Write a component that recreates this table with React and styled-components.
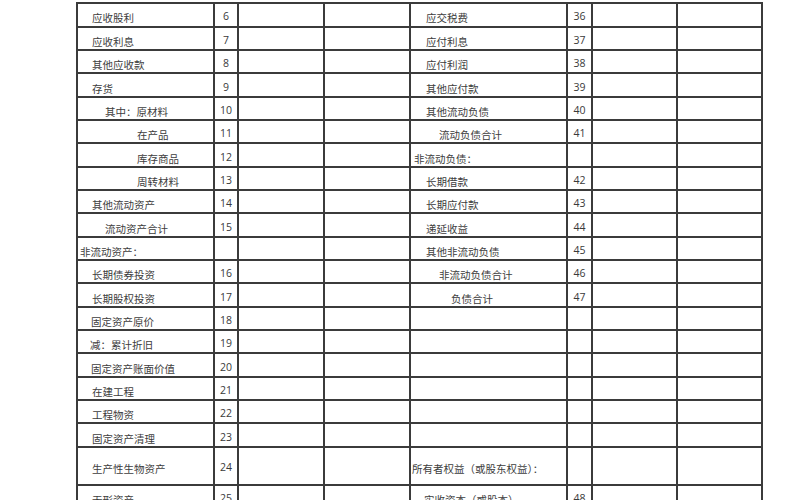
import React from "react";
import styled, { createGlobalStyle } from "styled-components";

const Global = createGlobalStyle`
  html, body {
    margin: 0;
    padding: 0;
    background: #ffffff;
    height: 500px;
    overflow: hidden;
  }
  body {
    font-family: "Noto Sans CJK SC", "Noto Sans", sans-serif;
  }
`;

const Page = styled.div`
  padding-top: 2.3px;
  padding-left: 76px;
`;

const Sheet = styled.div`
  display: grid;
  width: 687px;
  box-sizing: border-box;
  grid-template-columns: 135px 22px 84px 84px 155px 23px 83px 83px;
  grid-template-rows: ${(p) => p.$rows};
  gap: 2px;
  padding: 2px;
  background: #3b3b3b;
`;

const Cell = styled.div`
  background: #ffffff;
  display: flex;
  align-items: center;
  box-sizing: border-box;
  overflow: hidden;
  white-space: nowrap;
`;

const Label = styled(Cell)`
  padding-left: ${(p) => p.$indent}px;
  padding-top: 6px;
  font-family: "Noto Sans CJK SC", sans-serif;
  font-size: 10.5px;
  color: #3d3d3d;
  letter-spacing: 0px;
`;

const Num = styled(Cell)`
  justify-content: center;
  padding-top: 3px;
  font-family: "Open Sans", "Noto Sans", sans-serif;
  font-size: 10.5px;
  color: #3a3a3a;
`;

const Blank = styled(Cell)``;

const left = [
  ["应收股利", 14, "6"],
  ["应收利息", 14, "7"],
  ["其他应收款", 14, "8"],
  ["存货", 14, "9"],
  ["其中：原材料", 27, "10"],
  ["在产品", 59, "11"],
  ["库存商品", 59, "12"],
  ["周转材料", 59, "13"],
  ["其他流动资产", 14, "14"],
  ["流动资产合计", 27, "15"],
  ["非流动资产：", 2, ""],
  ["长期债券投资", 14, "16"],
  ["长期股权投资", 14, "17"],
  ["固定资产原价", 13, "18"],
  ["减：累计折旧", 12, "19"],
  ["固定资产账面价值", 13, "20"],
  ["在建工程", 14, "21"],
  ["工程物资", 14, "22"],
  ["固定资产清理", 14, "23"],
  ["生产性生物资产", 14, "24"],
  ["无形资产", 14, "25"],
];

const right = [
  ["应交税费", 15, "36"],
  ["应付利息", 15, "37"],
  ["应付利润", 15, "38"],
  ["其他应付款", 15, "39"],
  ["其他流动负债", 15, "40"],
  ["流动负债合计", 28, "41"],
  ["非流动负债：", 3, ""],
  ["长期借款", 15, "42"],
  ["长期应付款", 15, "43"],
  ["递延收益", 15, "44"],
  ["其他非流动负债", 15, "45"],
  ["非流动负债合计", 28, "46"],
  ["负债合计", 40, "47"],
  ["", 0, ""],
  ["", 0, ""],
  ["", 0, ""],
  ["", 0, ""],
  ["", 0, ""],
  ["", 0, ""],
  ["所有者权益（或股东权益）：", 1, ""],
  ["实收资本（或股本）", 13, "48"],
];

const rowHeights = left
  .map((_, i) => (i === 19 ? "36px" : "21.35px"))
  .join(" ");

export default function App() {
  return (
    <>
      <Global />
      <Page>
        <Sheet $rows={rowHeights}>
          {left.map((l, i) => {
            const r = right[i];
            return (
              <React.Fragment key={i}>
                <Label $indent={l[1]}>{l[0]}</Label>
                <Num>{l[2]}</Num>
                <Blank />
                <Blank />
                <Label $indent={r[1]}>{r[0]}</Label>
                <Num>{r[2]}</Num>
                <Blank />
                <Blank />
              </React.Fragment>
            );
          })}
        </Sheet>
      </Page>
    </>
  );
}
